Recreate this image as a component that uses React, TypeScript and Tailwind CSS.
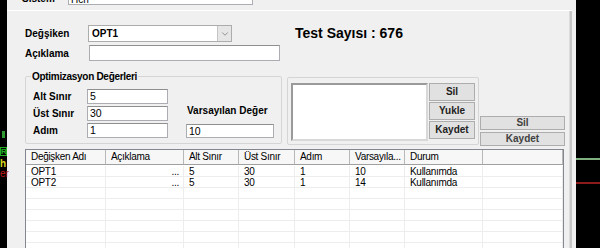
import { ChevronDown } from 'lucide-react'

const cols = [
  { label: 'Değişken Adı', w: 'w-[80px]' },
  { label: 'Açıklama', w: 'w-[78px]' },
  { label: 'Alt Sınır', w: 'w-[55px]' },
  { label: 'Üst Sınır', w: 'w-[56px]' },
  { label: 'Adım', w: 'w-[55px]' },
  { label: 'Varsayıla...', w: 'w-[55px]' },
  { label: 'Durum', w: 'w-[78px]' },
  { label: '', w: 'w-[80px]' },
]

const rows = [
  ['OPT1', '...', '5', '30', '1', '10', 'Kullanımda', ''],
  ['OPT2', '...', '5', '30', '1', '14', 'Kullanımda', ''],
  ['', '', '', '', '', '', '', ''],
  ['', '', '', '', '', '', '', ''],
  ['', '', '', '', '', '', '', ''],
  ['', '', '', '', '', '', '', ''],
  ['', '', '', '', '', '', '', ''],
  ['', '', '', '', '', '', '', ''],
]

function TextBox({ value, className }: { value?: string; className: string }) {
  return (
    <div
      className={`flex items-center bg-white border border-[#abadb3] border-t-[#8e8f8f] pl-[2px] text-[10.5px] leading-none ${className}`}
    >
      {value}
    </div>
  )
}

function GrayButton({ label, className }: { label: string; className: string }) {
  return (
    <div
      className={`flex items-center justify-center bg-[#e1e1e1] border border-[#adadad] text-[10px] font-bold text-[#222] leading-none ${className}`}
    >
      {label}
    </div>
  )
}

function LeftChart() {
  return (
    <div className="relative w-[7px] h-full bg-black shrink-0">
      <div className="absolute left-[2px] top-[131px] w-[3px] h-[7px] bg-[#2f9a2f]" />
      <div className="absolute left-0 top-[147px] w-[7px] h-[9px] border border-[#22b022] text-[8px] leading-[7px] text-[#22b022] font-bold overflow-hidden">
        R
      </div>
      <div className="absolute left-0 top-[159px] text-[10px] leading-none text-[#d8d820] font-bold">h</div>
      <div className="absolute left-0 top-[169px] text-[10px] leading-none text-[#c01818]">er</div>
    </div>
  )
}

function RightChart() {
  return (
    <div className="flex flex-col w-[24px] h-full bg-black shrink-0">
      <div className="h-[158px]" />
      <div className="h-[2px] bg-[#7fae80]" />
      <div className="h-[22px]" />
      <div className="h-[2px] bg-[#8c1c1c]" />
    </div>
  )
}

export default function App() {
  return (
    <div className="flex w-[600px] h-[248px] overflow-hidden bg-black text-black font-['Liberation_Sans',Arial,sans-serif]">
      <LeftChart />

      <div className="flex flex-col w-[562px] h-full bg-[#f0f0f0] shrink-0">
        {/* parent window strip */}
        <div className="h-[11px] border-b border-white overflow-hidden shrink-0">
          <div className="flex items-center h-[14px] -mt-[9px] pl-[15px]">
            <span className="w-[46px] text-[10px] font-bold">Sistem</span>
            <div className="w-[185px] h-[14px] bg-white border border-[#abadb3] text-[10px] pl-[2px]">Hch</div>
          </div>
        </div>

        <div className="flex flex-col pl-[18px] pt-[14px]">
          <div className="flex items-center h-[17px]">
            <span className="w-[63px] text-[10px] font-bold">Değşiken</span>
            <div className="flex items-center w-[144px] h-[17px] bg-white border border-[#acacac]">
              <span className="flex-1 pl-[3px] text-[10px] font-bold">OPT1</span>
              <div className="flex items-center justify-center w-[14px] h-[15px] bg-[#e6e6e6] border-l border-[#c4c4c4]">
                <ChevronDown className="w-[10px] h-[10px] text-[#606060]" strokeWidth={1.5} />
              </div>
            </div>
            <span className="ml-[63px] text-[14px] font-bold">Test Sayısı : 676</span>
          </div>

          <div className="flex items-center mt-[3px] h-[16px]">
            <span className="w-[64px] text-[10px] font-bold">Açıklama</span>
            <TextBox className="w-[191px] h-[16px]" />
          </div>

          <div className="flex mt-[9px] h-[78px]">
            <fieldset className="w-[257px] h-[74px] border border-[#d5d5d5] rounded-[2px] pl-[7px] shrink-0">
              <legend className="-ml-[2px] px-[1px] text-[10px] font-bold leading-[13px] tracking-[-0.3px]">
                Optimizasyon Değerleri
              </legend>
              <div className="flex mt-[6px]">
                <div className="flex flex-col gap-[2px]">
                  {[
                    ['Alt Sınır', '5'],
                    ['Üst Sınır', '30'],
                    ['Adım', '1'],
                  ].map(([l, v]) => (
                    <div key={l} className="flex items-center h-[15px]">
                      <span className="w-[54px] text-[10px] font-bold">{l}</span>
                      <TextBox value={v} className="w-[81px] h-[15px]" />
                    </div>
                  ))}
                </div>
                <div className="flex flex-col justify-end ml-[18px]">
                  <span className="text-[10px] font-bold mb-[6px] pl-[1px]">Varsayılan Değer</span>
                  <TextBox value="10" className="w-[88px] h-[14px]" />
                </div>
              </div>
            </fieldset>

            <div className="flex mt-[7px] ml-[5px] w-[192px] h-[68px] border border-[#d5d5d5] rounded-[2px] pt-[5px] pl-[3px] shrink-0">
              <div className="w-[137px] h-[58px] bg-white border-2 border-[#9a9a9a] border-b-[#d8d8d8] border-r-[#d8d8d8]" />
              <div className="flex flex-col gap-[1px] ml-[1px]">
                <GrayButton label="Sil" className="w-[46px] h-[18px]" />
                <GrayButton label="Yukle" className="w-[46px] h-[18px]" />
                <GrayButton label="Kaydet" className="w-[46px] h-[18px]" />
              </div>
            </div>

            <div className="flex flex-col justify-end gap-[2px] pb-[2px] ml-[1px]">
              <GrayButton label="Sil" className="w-[85px] h-[14px] text-[#404040]" />
              <GrayButton label="Kaydet" className="w-[85px] h-[14px] text-[#404040]" />
            </div>
          </div>

          <div className="mt-[1px] w-[539px] h-[110px] border border-[#828790] bg-white overflow-hidden">
            <div className="flex h-[15px] bg-[#f7f7f7] border-b border-[#a0a0a0]">
              {cols.map((c, i) => (
                <div
                  key={i}
                  className={`${c.w} shrink-0 border-r border-[#b8b8b8] pl-[5px] text-[10px] leading-[14px] tracking-[-0.3px]`}
                >
                  {c.label}
                </div>
              ))}
            </div>
            <div className="h-[1px]" />
            {rows.map((r, ri) => (
              <div key={ri} className="flex h-[11px] border-b border-[#ededed]">
                {r.map((cell, ci) => (
                  <div
                    key={ci}
                    className={`${cols[ci].w} shrink-0 border-r border-[#ededed] text-[10px] leading-[11px] tracking-[-0.3px] ${
                      ci === 1 ? 'text-right pr-[4px]' : 'pl-[5px]'
                    }`}
                  >
                    {cell}
                  </div>
                ))}
              </div>
            ))}
          </div>
        </div>
      </div>

      <div className="flex flex-col w-[3px] h-full bg-[#f0f0f0] shrink-0">
        <div className="h-[11px] border-b border-white" />
        <div className="flex-1 bg-[#c6c6c6] border-l border-[#dcdcdc]" />
      </div>
      <div className="w-[4px] h-full bg-[#f0f0f0] shrink-0" />
      <RightChart />
    </div>
  )
}
